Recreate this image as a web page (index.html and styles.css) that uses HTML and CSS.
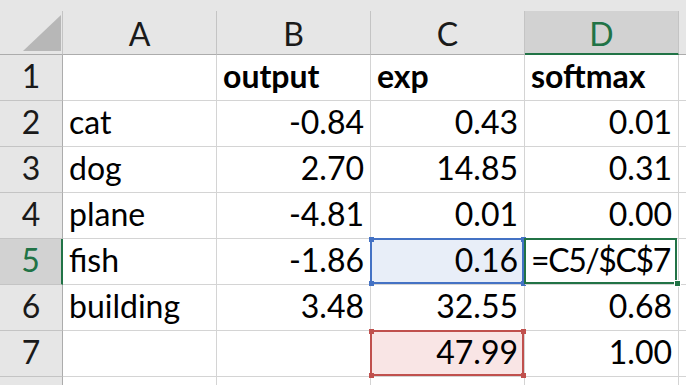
FILE: index.html
```html
<!DOCTYPE html>
<html>
<head>
<meta charset="utf-8">
<link rel="stylesheet" href="styles.css">
</head>
<body>
<div class="sheet">
  <div class="grid">
    <div class="corner"><svg class="tri" width="38" height="36" viewBox="0 0 38 36"><polygon points="38,0 38,36 0,36" fill="#b7b7b7"/></svg></div>
    <div class="ch">A</div>
    <div class="ch">B</div>
    <div class="ch">C</div>
    <div class="ch ch-sel">D</div>
    <div class="ch"></div>

    <div class="rh">1</div>
    <div class="c"></div>
    <div class="c b">output</div>
    <div class="c b">exp</div>
    <div class="c b">softmax</div>
    <div class="c"></div>

    <div class="rh">2</div>
    <div class="c">cat</div>
    <div class="c n">-0.84</div>
    <div class="c n">0.43</div>
    <div class="c n">0.01</div>
    <div class="c"></div>

    <div class="rh">3</div>
    <div class="c">dog</div>
    <div class="c n">2.70</div>
    <div class="c n">14.85</div>
    <div class="c n">0.31</div>
    <div class="c"></div>

    <div class="rh">4</div>
    <div class="c">plane</div>
    <div class="c n">-4.81</div>
    <div class="c n">0.01</div>
    <div class="c n">0.00</div>
    <div class="c"></div>

    <div class="rh rh-sel">5</div>
    <div class="c">fish</div>
    <div class="c n">-1.86</div>
    <div class="c n ref-blue">0.16<i class="h tl"></i><i class="h tr"></i><i class="h bl"></i><i class="h br"></i></div>
    <div class="c edit"><span class="formula">=C5/$C$7</span><i class="fill"></i></div>
    <div class="c"></div>

    <div class="rh">6</div>
    <div class="c">building</div>
    <div class="c n">3.48</div>
    <div class="c n">32.55</div>
    <div class="c n">0.68</div>
    <div class="c"></div>

    <div class="rh">7</div>
    <div class="c"></div>
    <div class="c"></div>
    <div class="c n ref-red">47.99<i class="h tl"></i><i class="h tr"></i><i class="h bl"></i><i class="h br"></i></div>
    <div class="c n">1.00</div>
    <div class="c"></div>

    <div class="rh"></div>
    <div class="c"></div>
    <div class="c"></div>
    <div class="c"></div>
    <div class="c"></div>
    <div class="c"></div>
  </div>
</div>
</body>
</html>
```
FILE: styles.css
```css
html, body {
  margin: 0;
  padding: 0;
  width: 686px;
  height: 385px;
  overflow: hidden;
  background: #fff;
}
.sheet {
  padding-top: 11px;
  background: #e6e6e6;
  font-family: "Lato", "Liberation Sans", sans-serif;
  font-size: 32px;
  color: #000;
}
.grid {
  display: grid;
  grid-template-columns: 63px repeat(5, 154px);
  grid-template-rows: 44px repeat(8, 46px);
  width: 686px;
  overflow: hidden;
}
.grid > div {
  box-sizing: border-box;
  position: relative;
}
.corner {
  background: #e6e6e6;
  border-right: 1px solid #c4c4c4;
  border-bottom: 1px solid #acacac;
  display: flex;
  justify-content: flex-end;
  align-items: flex-end;
  padding: 0 1px 3px 0;
}
.tri { display: block; }
.ch {
  background: #e6e6e6;
  border-right: 1px solid #c4c4c4;
  border-bottom: 1px solid #acacac;
  display: flex;
  justify-content: center;
  align-items: center;
  color: #1a1a1a;
  padding-top: 2px;
}
.ch-sel {
  background: #d2d2d2;
  color: #217346;
  border-bottom: 2px solid #217346;
}
.rh {
  background: #e6e6e6;
  border-right: 1px solid #acacac;
  border-bottom: 1px solid #c4c4c4;
  display: flex;
  justify-content: center;
  align-items: flex-end;
  padding-bottom: 5px;
  color: #1a1a1a;
}
.rh-sel {
  background: #d2d2d2;
  color: #217346;
  border-right: 2px solid #217346;
}
.c {
  background: #fff;
  border-right: 1px solid #d4d4d4;
  border-bottom: 1px solid #d4d4d4;
  display: flex;
  align-items: flex-end;
  padding: 0 6px 5px 6px;
  white-space: nowrap;
}
.c.b { font-weight: bold; }
.c.n { justify-content: flex-end; }
.formula { letter-spacing: -1.4px; }

.ref-blue, .ref-red, .edit { z-index: 1; }
.ref-blue { background: #e8eef8; }
.ref-red { background: #f9e5e5; }
.ref-blue::before, .ref-red::before, .edit::before {
  content: "";
  position: absolute;
  left: -1px;
  top: -1px;
  right: 0;
  bottom: 0;
  border: 2px solid #4472c4;
  pointer-events: none;
}
.ref-red::before { border-color: #c0504d; }
.edit::before { border-color: #217346; right: 1px; }
.h {
  position: absolute;
  width: 5px;
  height: 5px;
  background: #4472c4;
}
.ref-red .h { background: #c0504d; }
.h.tl { left: -2px; top: -2px; }
.h.tr { right: -2px; top: -2px; }
.h.bl { left: -2px; bottom: -2px; }
.h.br { right: -2px; bottom: -2px; }
.fill {
  position: absolute;
  width: 5px;
  height: 5px;
  right: -2px;
  bottom: -2px;
  background: #217346;
  box-shadow: 0 0 0 1px #fff;
}
```
